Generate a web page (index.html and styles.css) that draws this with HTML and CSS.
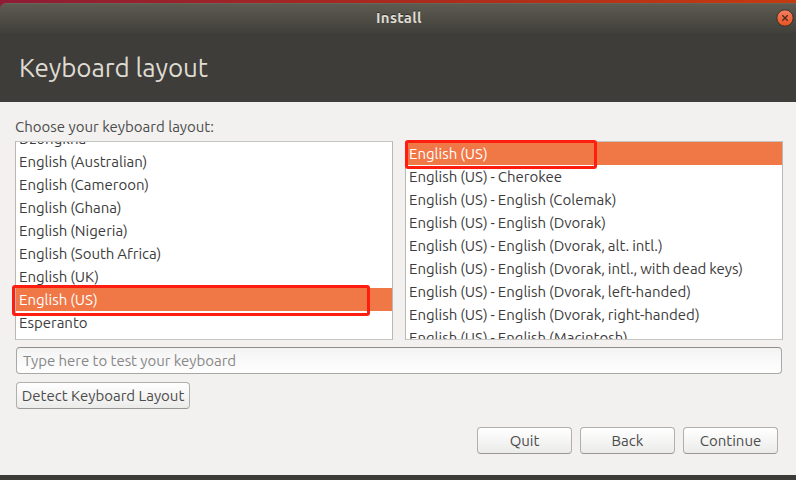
FILE: index.html
```html
<!DOCTYPE html>
<html lang="en">
<head>
<meta charset="utf-8">
<title>Install</title>
<link rel="stylesheet" href="styles.css">
</head>
<body>
<div class="window">
  <header class="titlebar">
    <span class="title">Install</span>
    <button class="close" aria-label="Close"><svg viewBox="0 0 18 18" width="18" height="18"><defs><linearGradient id="disc" x1="0" y1="0" x2="0" y2="1"><stop offset="0" stop-color="#f58063"/><stop offset="1" stop-color="#e9531f"/></linearGradient></defs><circle class="close-disc" cx="9" cy="9" r="8.2" fill="url(#disc)"/><path class="close-cross" d="M6.3 6.3l5.4 5.4M11.7 6.3l-5.4 5.4"/></svg></button>
  </header>
  <div class="heading"><h1>Keyboard layout</h1></div>
  <main class="content">
    <div class="prompt">Choose your keyboard layout:</div>
    <div class="lists">
      <div class="pane">
        <ul class="list scrolled">
          <li>Dzongkha</li>
          <li>English (Australian)</li>
          <li>English (Cameroon)</li>
          <li>English (Ghana)</li>
          <li>English (Nigeria)</li>
          <li>English (South Africa)</li>
          <li>English (UK)</li>
          <li class="selected">English (US)</li>
          <li>Esperanto</li>
        </ul>
        <div class="mark mark-language"></div>
      </div>
      <div class="pane">
        <ul class="list">
          <li class="selected">English (US)</li>
          <li>English (US) - Cherokee</li>
          <li>English (US) - English (Colemak)</li>
          <li>English (US) - English (Dvorak)</li>
          <li>English (US) - English (Dvorak, alt. intl.)</li>
          <li>English (US) - English (Dvorak, intl., with dead keys)</li>
          <li>English (US) - English (Dvorak, left-handed)</li>
          <li>English (US) - English (Dvorak, right-handed)</li>
          <li>English (US) - English (Macintosh)</li>
        </ul>
        <div class="mark mark-variant"></div>
      </div>
    </div>
    <input class="test" type="text" placeholder="Type here to test your keyboard">
    <button class="btn detect">Detect Keyboard Layout</button>
    <footer class="actions">
      <button class="btn">Quit</button>
      <button class="btn">Back</button>
      <button class="btn">Continue</button>
    </footer>
  </main>
  <div class="base"></div>
</div>
</body>
</html>
```
FILE: styles.css
```css
* { box-sizing: border-box; }
body {
  margin: 0;
  width: 796px;
  height: 480px;
  overflow: hidden;
  padding-top: 3px;
  background: linear-gradient(90deg, #8e1c35, #a92a1e 50%, #c53b10);
  font: 15px/23px Ubuntu, "Noto Sans", sans-serif;
  color: #3c3c3c;
}
.window { height: 477px; display: flex; flex-direction: column; }
.titlebar {
  height: 30px;
  display: grid;
  grid-template-columns: 30px 1fr 20px;
  align-items: center;
  background: linear-gradient(#5d5b51, #403f3a);
  border-top: 1px solid #686458;
  border-radius: 6px 0 0 0;
}
.title {
  grid-column: 2;
  margin-top: -2px;
  padding-right: 8px;
  text-align: center;
  font-weight: 700;
  font-size: 15px;
  letter-spacing: 0.3px;
  color: #dfdbd2;
  text-shadow: 0 -1px #2c2b28;
}
.close { display: block; width: 18px; height: 18px; margin-top: -1px; border: 0; padding: 0; background: none; }
.close svg { display: block; }
.close-disc { stroke: #3a302a; stroke-width: 1; }
.close-cross { stroke: #4a2a1c; stroke-width: 1.3; }
.heading { height: 69px; padding: 16px 19px 0; background: #3e3d39; }
h1 { margin: 0; font-size: 26px; line-height: 38px; font-weight: 400; letter-spacing: -0.08px; color: #dfdbd2; }
.content {
  height: 373px;
  padding: 14px 13px 0 15px;
  background: #f2f1ef;
  display: flex;
  flex-direction: column;
  align-items: flex-start;
}
.prompt { height: 25px; line-height: 21px; color: #4c4c4c; }
.lists { align-self: stretch; display: grid; grid-template-columns: 1fr 1fr; gap: 12px; }
.pane { position: relative; height: 199px; border: 1px solid #bbb8b4; border-top-color: #c4c4c2; border-bottom-color: #c8c6c2; background: #fff; }
.list { margin: 0; padding: 0; height: 197px; overflow: hidden; list-style: none; word-spacing: -0.55px; }
.scrolled li:first-child { margin-top: -15px; }
.list li { height: 23px; padding-left: 3px; line-height: 24px; white-space: nowrap; }
.list .selected { background: #f07746; color: #fff; }
.mark { position: absolute; border: 3px solid #ff1d10; border-radius: 3px; }
.mark-language { left: -4px; top: 143px; width: 358px; height: 31px; }
.mark-variant { left: -1px; top: -2px; width: 192px; height: 29px; }
.test {
  width: 766px;
  height: 27px;
  margin: 7px 0 1px 1px;
  padding: 0 6px 1px;
  border: 1px solid #a8a8a6;
  border-top-color: #8e8e8e;
  border-radius: 4px;
  background: linear-gradient(#f3f3f3, #fff);
  font: inherit;
  letter-spacing: -0.04px;
}
.test::placeholder { color: #888; opacity: 1; }
.btn {
  width: 95px;
  height: 27px;
  padding: 0;
  border: 1px solid #b0afad;
  border-bottom-color: #989795;
  border-radius: 4px;
  background: linear-gradient(#fff, #ebebea);
  font: inherit;
  color: #4c4c4c;
  white-space: nowrap;
}
.detect { width: 174px; margin: 7px 0 0 1px; }
.actions { align-self: stretch; display: flex; justify-content: flex-end; gap: 8px; margin: 18px 5px 0 0; }
.base { height: 5px; background: #3c3b37; }
```
